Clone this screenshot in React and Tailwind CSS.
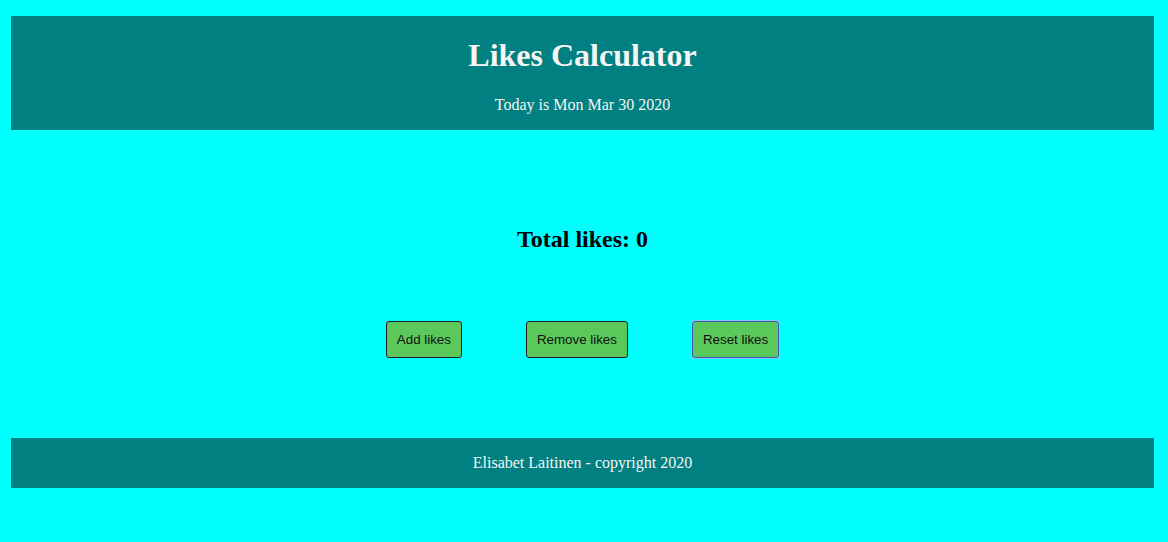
export default function App() {
  const serif = { fontFamily: '"Liberation Serif", "Times New Roman", serif' };
  return (
    <div className="min-h-[542px] bg-[#00ffff] pt-[16px] pb-[54px] pl-[11px] pr-[14px]" style={serif}>
      <header className="h-[114px] bg-[#008080] pt-[22px] text-center text-[#f5f5f5]">
        <h1 className="text-[32px] font-bold leading-[35px]">Likes Calculator</h1>
        <p className="mt-[23px] text-[16px] leading-[18px]">Today is Mon Mar 30 2020</p>
      </header>
      <main className="pt-[96px] pb-[80px] text-center">
        <h2 className="text-[24px] font-bold leading-[27px] text-black">Total likes: 0</h2>
        <div className="mt-[68px] flex justify-center gap-[64px]" style={{ fontFamily: '"Liberation Sans", Arial, sans-serif' }}>
          <button className="h-[37px] rounded-[3px] border border-[#1f1f1f] bg-[#5bc85b] px-[10px] text-[13.33px] text-[#111]">Add likes</button>
          <button className="h-[37px] rounded-[3px] border border-[#1f1f1f] bg-[#5bc85b] px-[10px] text-[13.33px] text-[#111]">Remove likes</button>
          <button className="h-[37px] rounded-[3px] border border-[#3c5ab4] bg-[#5bc85b] px-[10px] text-[13.33px] text-[#111] shadow-[0_0_0_1px_#8cc4ff]">Reset likes</button>
        </div>
      </main>
      <footer className="h-[50px] bg-[#008080] pt-[16px] text-center text-[16px] leading-[18px] text-[#f5f5f5]">
        Elisabet Laitinen - copyright 2020
      </footer>
    </div>
  );
}
